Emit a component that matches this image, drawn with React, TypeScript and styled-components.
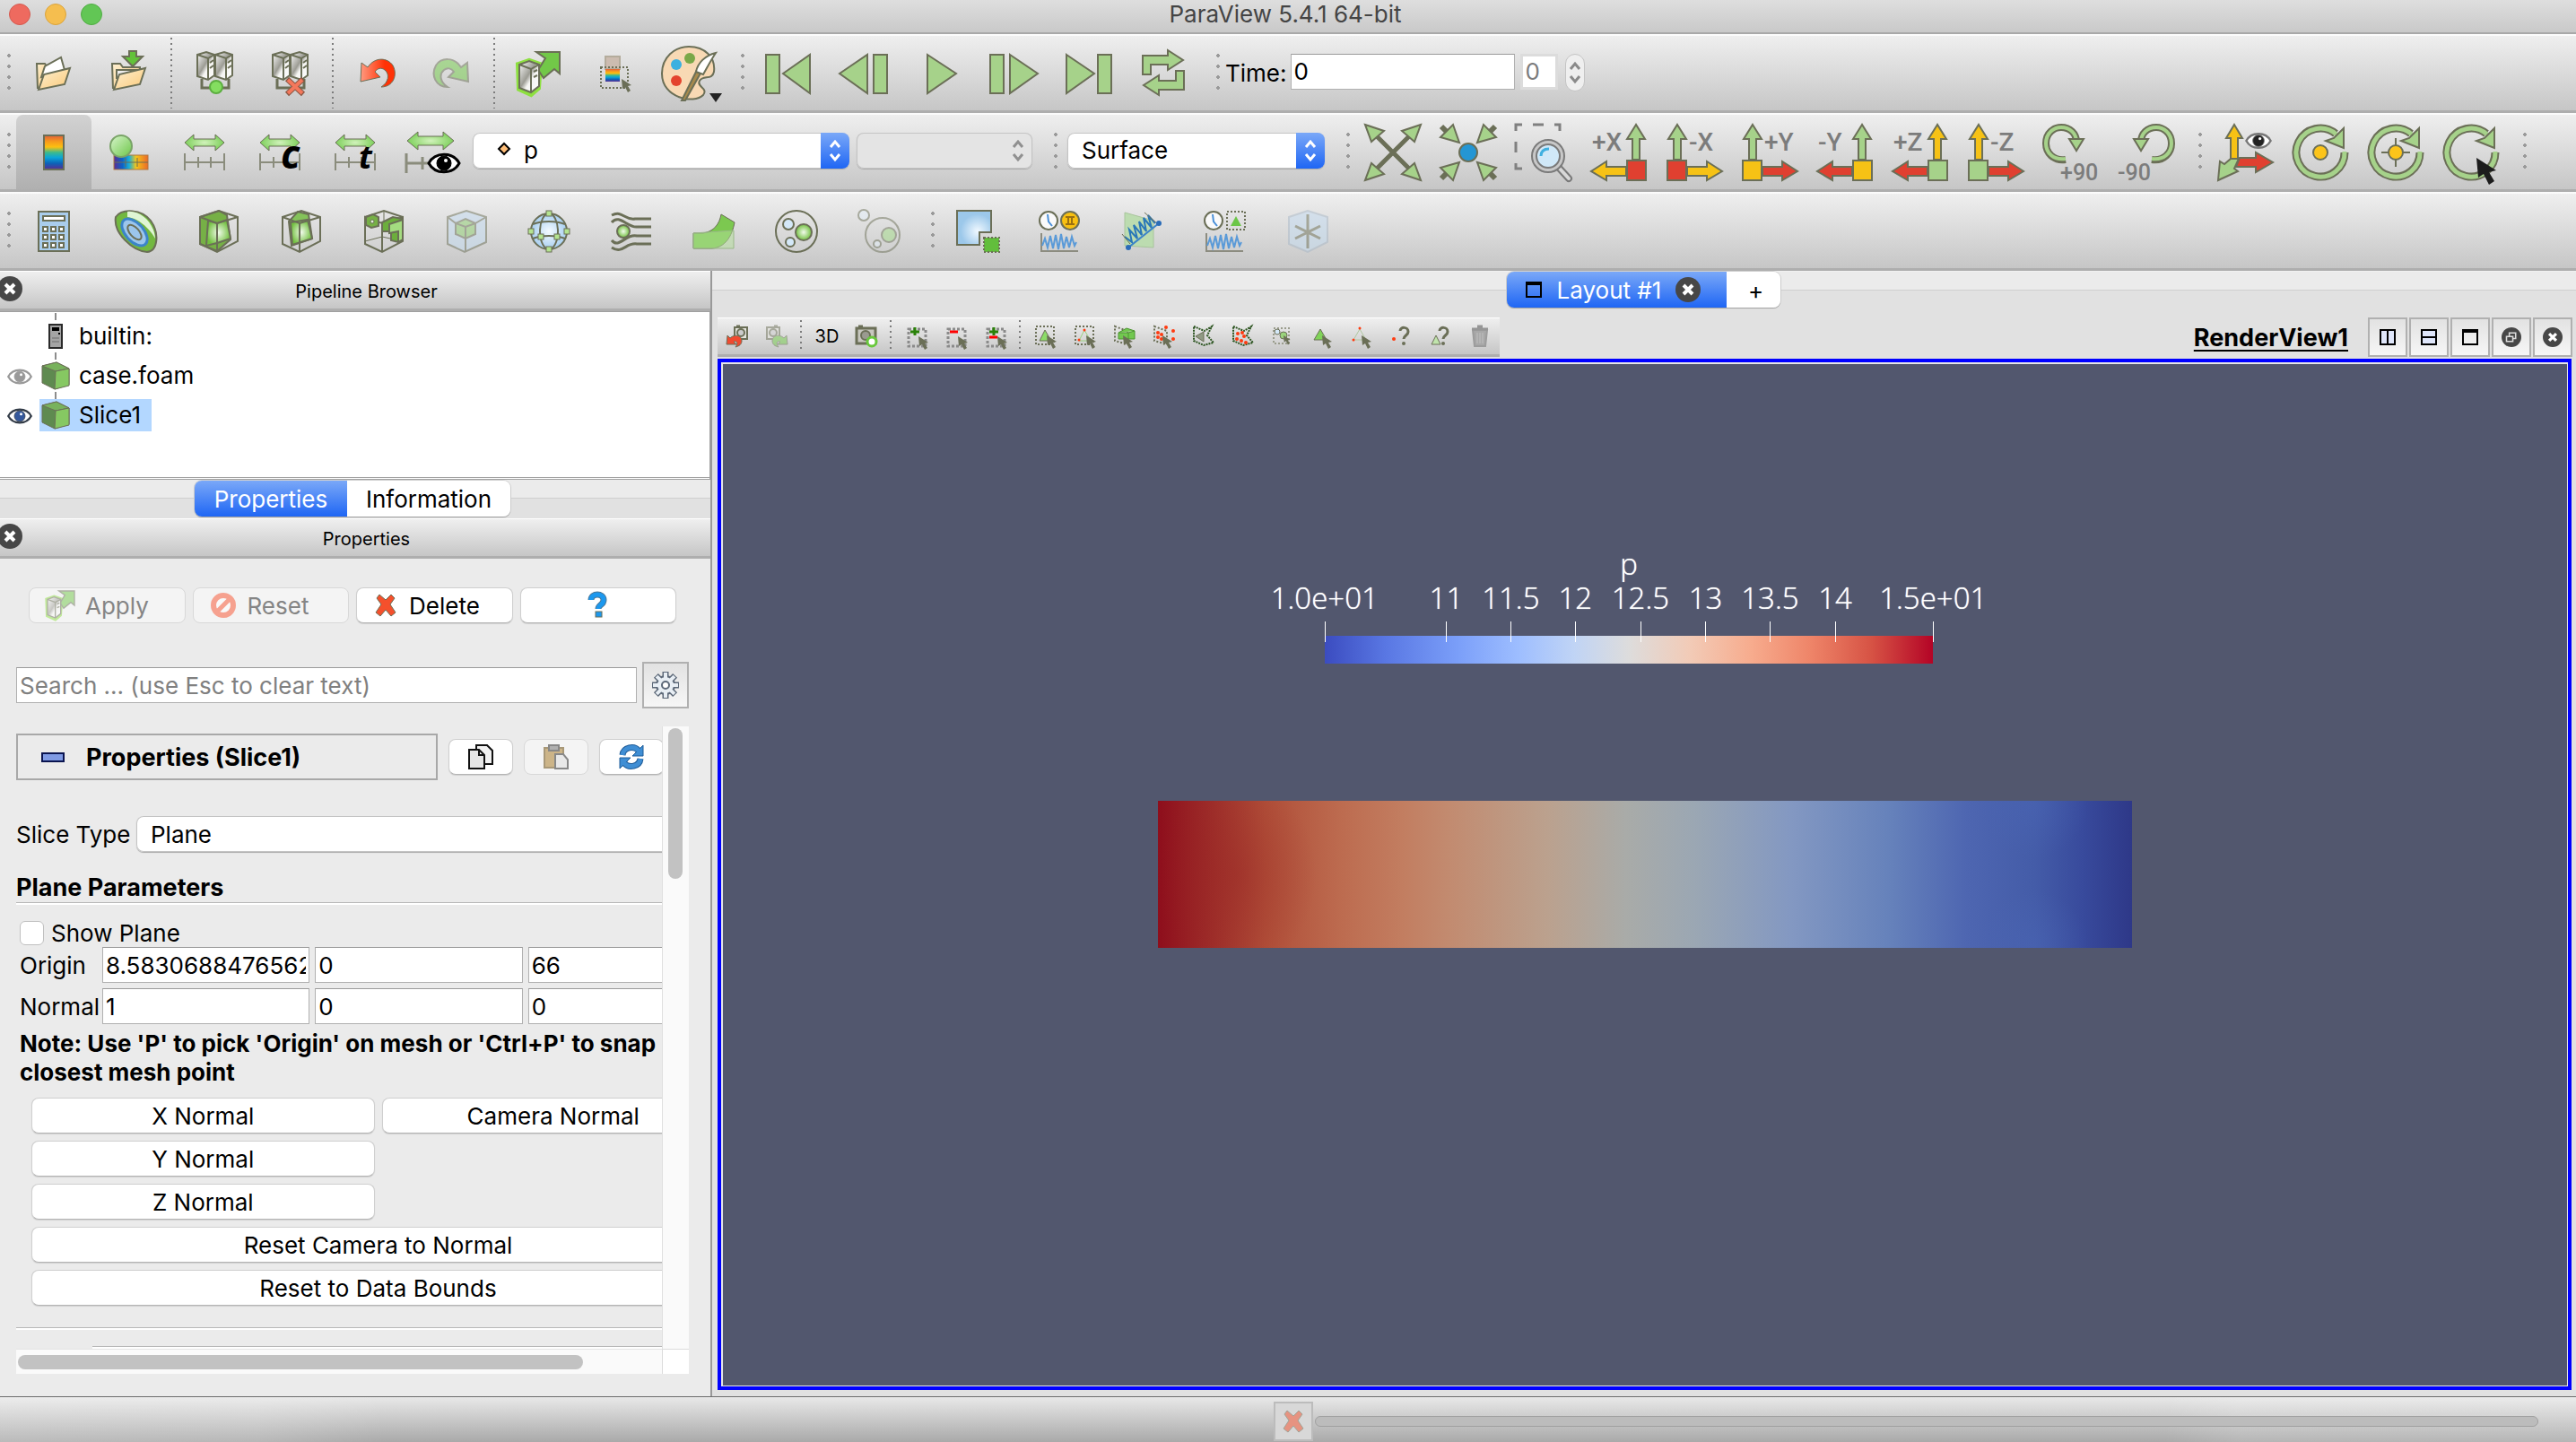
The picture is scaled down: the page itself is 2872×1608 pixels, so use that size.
import React from "react";
import styled, { createGlobalStyle, css } from "styled-components";

const OL = "#6b6f57";
const GR = "#a6d28a";
const YE = "#f6c215";
const RE = "#e04030";
const UI = `Inter, "Liberation Sans", sans-serif`;

const GlobalStyle = createGlobalStyle`
  * { box-sizing: border-box; }
  body { margin: 0; background: #ebebeb; font-family: ${UI}; font-size: 26px; color: #000; }
  button, input, select { font: inherit; color: inherit; margin: 0; }
  h1, h2, h3, p { margin: 0; font-weight: 400; }
`;

/* ---------- shared drawing helpers ---------- */

const Defs = () => (
  <HiddenSvg aria-hidden="true">
    <defs>
      <linearGradient id="rainbow" x1="0" y1="0" x2="0" y2="1">
        <stop offset="0" stopColor="#e0603a" />
        <stop offset=".18" stopColor="#f79a1c" />
        <stop offset=".34" stopColor="#fcc010" />
        <stop offset=".5" stopColor="#3cba8c" />
        <stop offset=".65" stopColor="#0aa5d8" />
        <stop offset=".82" stopColor="#0c62b8" />
        <stop offset="1" stopColor="#5b2c92" />
      </linearGradient>
      <linearGradient id="rainbowH" x1="0" y1="0" x2="1" y2="0">
        <stop offset="0" stopColor="#5b2c92" />
        <stop offset=".25" stopColor="#0c62c8" />
        <stop offset=".45" stopColor="#1ab0d8" />
        <stop offset=".65" stopColor="#f5c518" />
        <stop offset="1" stopColor="#ea6a2a" />
      </linearGradient>
      <linearGradient id="folder" x1="0" y1="0" x2="1" y2="1">
        <stop offset="0" stopColor="#fdf0d2" />
        <stop offset="1" stopColor="#fbc978" />
      </linearGradient>
      <linearGradient id="metal" x1="0" y1="0" x2="1" y2="1">
        <stop offset="0" stopColor="#ffffff" />
        <stop offset=".45" stopColor="#9c9c94" />
        <stop offset=".6" stopColor="#f5f5f2" />
        <stop offset="1" stopColor="#ffffff" />
      </linearGradient>
      <radialGradient id="green">
        <stop offset="0" stopColor="#f2fbec" />
        <stop offset="1" stopColor="#72c040" />
      </radialGradient>
      <linearGradient id="greenL" x1="0" y1="0" x2="1" y2="1">
        <stop offset="0" stopColor="#d8f5cc" />
        <stop offset="1" stopColor="#6cc648" />
      </linearGradient>
      <radialGradient id="greenA">
        <stop offset="0" stopColor="#d2f2bc" />
        <stop offset="1" stopColor="#7ed05c" />
      </radialGradient>
      <linearGradient id="redL" x1="0" y1="0" x2="1" y2="0">
        <stop offset="0" stopColor="#ff9a80" />
        <stop offset=".7" stopColor="#ff3206" />
      </linearGradient>
      <radialGradient id="blue">
        <stop offset="0" stopColor="#f4faff" />
        <stop offset="1" stopColor="#a8cff0" />
      </radialGradient>
      <radialGradient id="blueSq" cx=".6" cy=".6">
        <stop offset="0" stopColor="#f0f8ff" />
        <stop offset="1" stopColor="#9cc8ea" />
      </radialGradient>
    </defs>
  </HiddenSvg>
);

const HiddenSvg = styled.svg`
  position: absolute;
  width: 0;
  height: 0;
`;

const Svg = styled.svg<{ $s: number; $faded?: boolean }>`
  display: block;
  flex: none;
  overflow: visible;
  width: ${(p) => p.$s}px;
  height: ${(p) => p.$s}px;
  opacity: ${(p) => (p.$faded ? 0.5 : 1)};
`;

type IconProps = { s?: number; v?: number; faded?: boolean; children: React.ReactNode };
const Icon = ({ s = 48, v, faded, children }: IconProps) => (
  <Svg $s={s} $faded={faded} viewBox={`0 0 ${v ?? s} ${v ?? s}`} aria-hidden="true" fill="none" stroke={OL} strokeWidth={2}>
    {children}
  </Svg>
);

const Cursor = ({ x, y, k = 1, c = OL }: { x: number; y: number; k?: number; c?: string }) => (
  <path d="M0 0 L1 11 L4 9 L7 15 L10 13 L7 8 L11 7 Z" transform={`translate(${x} ${y}) scale(${k})`} fill={c} stroke="none" />
);

/* ---------- main toolbar icons ---------- */

const OpenIcon = () => (
  <Icon>
    <path d="M6 41 L5 13 H14 L17 17 V34" fill="url(#folder)" />
    <path d="M10 28 L14 16 L32 6 L36 20 Z" fill="#fff" />
    <path d="M7 42 L13 25 L42 18 L36 36 Z" fill="url(#folder)" />
  </Icon>
);
const LoadIcon = () => (
  <Icon>
    <path d="M6 41 L5 13 H14 L17 17 H36 V24" fill="url(#folder)" />
    <path d="M10 30 V20 H36" fill="#eee" />
    <path d="M7 42 L13 25 L42 18 L36 36 Z" fill="url(#folder)" />
    <path d="M24 -1 H32 V5 H39 L28 16 L17 5 H24 Z" fill="#62c23a" />
  </Icon>
);
const Servers = ({ bad }: { bad?: boolean }) => (
  <Icon>
    <path d="M9 30 V40 H39 V30" strokeWidth={3} />
    {[4, 24].map((x) => (
      <g key={x} strokeWidth={2}>
        <path d={`M${x} 3 L${x + 10} 0 L${x + 19} 3 V26 L${x + 12} 31 L${x} 27 Z`} fill="url(#metal)" />
        <path d={`M${x} 3 L${x + 12} 7 L${x + 19} 3 M${x + 12} 7 V31 M${x + 14} 12 L${x + 18} 9 M${x + 14} 18 L${x + 18} 15`} />
      </g>
    ))}
    {bad ? (
      <>
        <path d="M20 30 L38 47 M38 30 L20 47" stroke="#8c5844" strokeWidth={6} />
        <path d="M21 31 L37 46 M37 31 L21 46" stroke="#f4785c" strokeWidth={4} />
      </>
    ) : (
      <circle cx="25" cy="39" r="7" fill="#84de60" stroke="#5cae40" />
    )}
  </Icon>
);
const UndoShape = "M6 33 L7 12 L14 17 C22 5 36 6 42 15 C48 26 42 39 29 39 C37 34 39 25 33 20 C29 17 25 18 22 22 L28 28 Z";
const UndoIcon = () => (
  <Icon>
    <path d={UndoShape} fill="url(#redL)" strokeWidth={1} />
  </Icon>
);
const RedoIcon = () => (
  <Icon faded>
    <path d={UndoShape} transform="translate(48 0) scale(-1 1)" fill="#72cc48" />
  </Icon>
);
const ServerArrow = ({ s = 48, faded }: { s?: number; faded?: boolean }) => (
  <Icon s={s} v={48} faded={faded}>
    <path d="M2 14 L14 10 L26 14 L24 40 L16 47 L3 41 Z" stroke="#8ee040" strokeWidth={6} />
    <path d="M22 0 H48 V24 L42 19 L30 29 L24 20 L32 7 Z" fill="#72c848" />
    <path d="M3 14 L14 10 L25 14 V38 L16 45 L3 40 Z" fill="url(#metal)" />
    <path d="M3 14 L16 19 L25 14 M16 19 V45 M19 22 L23 20 M19 28 L23 26" />
  </Icon>
);
const CaptureIcon = () => (
  <Icon>
    <rect x="15" y="5" width="16" height="14" fill="#ccbcb0" stroke="#b4ac9c" />
    <rect x="15" y="19" width="16" height="14" fill="url(#rainbow)" stroke="none" />
    <path d="M10 17 H40 V40 H10 Z" strokeDasharray="2 2" />
    <Cursor x={33} y={30} />
  </Icon>
);
const PaletteIcon = () => (
  <Icon s={64}>
    <path d="M32 2 C50 2 62 14 60 30 C58 40 48 33 44 40 C40 47 54 48 48 56 C38 66 2 60 2 32 C2 14 16 2 32 2 Z" fill="#f8d9b4" />
    <circle cx="33" cy="15" r="6" fill="#7aa848" stroke="none" />
    <circle cx="18" cy="22" r="6" fill="#3cb0e0" stroke="none" />
    <circle cx="18" cy="40" r="6" fill="#e4442e" stroke="none" />
    <path d="M46 30 L41 28 L24 62 H28 Z" fill="#a88a4c" />
    <path d="M62 9 C50 12 42 20 40 30 L48 33 C52 26 56 18 62 9 Z" fill="#fff" />
    <path d="M55 54 H69 L62 64 Z" fill="#222" stroke="none" />
  </Icon>
);

const TriBar = ({ tri, bar }: { tri: string; bar?: number }) => (
  <Icon s={64}>
    <path d={tri} fill={GR} />
    {bar !== undefined && <rect x={bar} y="11" width="15" height="43" fill={GR} />}
  </Icon>
);
const LoopIcon = () => (
  <Icon s={64}>
    {[0, 180].map((a) => (
      <path key={a} transform={`rotate(${a} 31 31)`} d="M8 33 V12 H36 V6 L53 17 L36 28 V22 H17 V33 Z" fill={GR} />
    ))}
  </Icon>
);

/* ---------- color toolbar icons ---------- */

const ColorBarIcon = () => (
  <Icon>
    <rect x="13" y="5" width="22" height="38" fill="url(#rainbow)" />
  </Icon>
);
const EditMapIcon = () => (
  <Icon>
    <rect x="7" y="27" width="38" height="16" fill="url(#rainbowH)" stroke="#b07840" strokeWidth={1} />
    <path d="M7 35 H45 M20 30 V40 M33 30 V40" strokeWidth={1} />
    <circle cx="15" cy="17" r="12" fill="url(#greenL)" stroke="#7aa468" />
  </Icon>
);
const Eye = ({ x, y, k = 1, iris = "#000", lid = "#000" }: { x: number; y: number; k?: number; iris?: string; lid?: string }) => (
  <g transform={`translate(${x} ${y}) scale(${k})`} stroke={lid}>
    <path d="M-17 0 C-10 -13 10 -13 17 0 C10 13 -10 13 -17 0 Z" fill="#fff" strokeWidth={3} />
    <circle r="8" fill={iris} strokeWidth={1} />
    <circle cx="2" cy="-3" r="2" fill="#fff" stroke="none" />
  </g>
);
const RescaleIcon = ({ mark }: { mark?: "c" | "t" }) => (
  <Icon>
    <path d="M2 13 L12 4 V9 H36 V4 L46 13 L36 22 V17 H12 V22 Z" fill="url(#greenA)" strokeWidth={1} />
    <path d="M2 25 V44 M2 35 H46 M17 29 V41 M31 29 V41 M46 25 V44" strokeWidth={2} stroke="#8a8c7c" />
    {mark && (
      <text x={mark === "c" ? 25 : 28} y="42" fontFamily="Open Sans, sans-serif" fontWeight={700} fontStyle="italic" fontSize={mark === "c" ? 44 : 36} fill="#000" stroke="none">
        {mark}
      </text>
    )}
  </Icon>
);
const RescaleVisibleIcon = () => (
  <Icon>
    <path d="M-2 11 L10 1 V6 H38 V1 L50 11 L38 21 V16 H10 V21 Z" fill="url(#greenA)" strokeWidth={1} />
    <path d="M-3 25 V47 M-3 36 H22 M15 29 V43" strokeWidth={3} stroke="#8a8c7c" />
    <Eye x={39} y={36} />
  </Icon>
);

/* ---------- camera toolbar icons ---------- */

const quarter = [
  [1, 1],
  [-1, 1],
  [1, -1],
  [-1, -1],
];
const ResetCamIcon = () => (
  <Icon s={64}>
    <path d="M8 8 L56 56 M56 8 L8 56" strokeWidth={5} />
    {quarter.map(([a, b]) => (
      <path key={`${a}${b}`} transform={`translate(32 32) scale(${a} ${b})`} d="M-31 -31 L-10 -24 L-24 -12 Z" fill={GR} />
    ))}
  </Icon>
);
const ZoomDataIcon = () => (
  <Icon s={64}>
    {quarter.map(([a, b]) => (
      <g key={`${a}${b}`} transform={`translate(32 32) scale(${a} ${b})`}>
        <path d="M-30 -29 L-20 -19" strokeWidth={6} />
        <path d="M-10 -11 L-31 -17 L-17 -31 Z" fill={GR} />
      </g>
    ))}
    <circle cx="32" cy="32" r="10" fill="#2496d4" />
  </Icon>
);
const ZoomBoxIcon = () => (
  <Icon s={64}>
    <path d="M1 8 V1 H8 M20 1 H32 M44 1 H50 V8 M1 20 V32 M1 44 V50 H8" stroke="#808080" strokeWidth={3} />
    <path d="M49 49 L60 61" stroke="#7a7a7a" strokeWidth={8} strokeLinecap="round" />
    <path d="M49 49 L60 61" stroke="#d8d8d8" strokeWidth={4} strokeLinecap="round" />
    <circle cx="37" cy="36" r="18" fill="#c8c8c8" stroke="#7a7a7a" />
    <circle cx="37" cy="36" r="13" fill="#d0e8f8" stroke="#7a7a7a" />
    <path d="M29 36 C29 30 33 28 38 28" stroke="#40b0e0" strokeWidth={3} />
  </Icon>
);
type AxisProps = { label: string; right?: boolean; up: string; box: string; side: string };
const AxisIcon = ({ label, right, up, box, side }: AxisProps) => (
  <Icon s={64}>
    <g transform={right ? undefined : "translate(64 0) scale(-1 1)"}>
      <path d="M13 1 L23 17 H17 V40 H9 V17 H3 Z" fill={up} />
      <path d="M24 48 H46 V42 L63 53 L46 63 V58 H24 Z" fill={side} />
      <rect x="2" y="41" width="21" height="22" fill={box} />
    </g>
    <text x={right ? 26 : 2} y="30" fontFamily="Roboto, sans-serif" fontWeight={500} fontSize="28" fill="#7c7c7c" stroke="none">
      {label}
    </text>
  </Icon>
);
const TurnIcon = ({ left }: { left?: boolean }) => (
  <Icon s={64}>
    <g transform={left ? "translate(64 0) scale(-1 1)" : undefined}>
      <path d="M26 40 C12 42 4 32 4 22 C4 10 13 4 21 4 C31 4 38 11 38 20" strokeWidth={8} />
      <path d="M26 39 C12 41 4 32 4 22 C4 10 13 4 21 4 C31 4 38 11 38 20" stroke={GR} strokeWidth={4} />
      <path d="M30 17 H46 L38 30 Z" fill={GR} />
    </g>
    <text x={left ? 0 : 20} y="63" fontFamily="Roboto, sans-serif" fontWeight={500} fontSize="25" fill="#7c7c7c" stroke="none">
      {left ? "-90" : "+90"}
    </text>
  </Icon>
);
const OrientIcon = () => (
  <Icon s={64}>
    <path d="M20 1 L29 16 H24 V40 H16 V16 H11 Z" fill={YE} />
    <path d="M26 38 H44 V32 L63 43 L44 54 V48 H22 Z" fill={RE} />
    <path d="M16 39 H25 L20 50 L24 53 L2 63 L4 42 L9 45 Z" fill={GR} />
    <Eye x={47} y={19} k={0.8} iris="#222" lid="#777" />
  </Icon>
);
const RotateIcon = ({ mark }: { mark: "dot" | "cross" | "cursor" }) => (
  <Icon s={64}>
    <path d="M59 32 A27 27 0 1 1 49 11" strokeWidth={9} />
    <path d="M59 31 A27 27 0 1 1 50 12" stroke={GR} strokeWidth={5} />
    <path d="M58 5 V27 L38 19 L47 16 Z" fill={GR} />
    {mark === "cross" && <path d="M32 16 V48 M16 32 H48" />}
    {mark !== "cursor" && <circle cx="32" cy="32" r="8" fill="#fcc41a" />}
    {mark === "cursor" && <Cursor x={38} y={38} k={2} c="#1c1c1c" />}
  </Icon>
);

/* ---------- filter toolbar icons ---------- */

const CalcIcon = () => (
  <Icon>
    <rect x="7" y="2" width="34" height="44" fill="#a9cdec" />
    <rect x="12" y="7" width="24" height="5" fill="#fff" />
    {[0, 1, 2].map((r) => [0, 1, 2].map((c) => <rect key={`${r}${c}`} x={12 + c * 9} y={19 + r * 9} width="5" height="5" fill="#fff" />))}
  </Icon>
);
const ContourIcon = () => (
  <Icon>
    <path d="M1 8 C8 -2 30 -1 40 12 C50 26 48 46 36 47 C20 46 -2 26 1 8 Z" fill="#72b840" />
    <path d="M14 2 C28 0 44 14 45 32 C42 26 30 10 14 8 Z" fill="#dff5d4" stroke="none" />
    <ellipse cx="22" cy="25" rx="18" ry="10" transform="rotate(48 22 25)" fill="#9cc6ec" stroke="#3c84c8" strokeWidth={3} />
    <ellipse cx="22" cy="25" rx="10" ry="5" transform="rotate(48 22 25)" />
  </Icon>
);
const CubeFrame = () => <path d="M3 8 L24 1 L45 8 V35 L22 47 L3 38 Z M3 8 L22 15 L45 8 M22 15 V47" />;
const ClipIcon = () => (
  <Icon>
    <path d="M3 8 L24 1 L33 6 L37 33 L22 46 L3 38 Z" fill="#76b046" />
    <path d="M12 12 L22 15 L33 11 L37 32 L22 37 L10 40 Z" fill="url(#green)" />
    <CubeFrame />
  </Icon>
);
const SliceIcon = () => (
  <Icon>
    <path d="M10 13 L20 2 L32 5 L36 32 L13 40 Z" fill="#84c25a" />
    <path d="M12 14 L31 11 L36 32 L14 39 Z" fill="url(#green)" />
    <CubeFrame />
  </Icon>
);
const ThresholdIcon = () => (
  <Icon>
    <path d="M3 35 L22 30 L45 35 M24 1 V12" strokeWidth={1} />
    <path d="M3 8 L22 15 L45 8 V35 L22 47 L3 38 Z L24 1 L45 8 M22 15 V47" />
    <path d="M4 8 L12 5 L18 8 V18 L10 20 L4 17 Z" fill="#76b046" />
    <path d="M22 14 L34 8 L45 10 V33 L40 36 L32 34 V24 H22 Z" fill="#6cae3c" />
    <path d="M30 16 L45 11 V33 L40 36 V24 L30 26 Z" fill="#a4dc80" />
    <circle cx="11" cy="13" r="2" fill="#e4f4dc" strokeWidth={1} />
  </Icon>
);
const SubsetIcon = () => (
  <Icon faded>
    <path d="M3 8 L24 1 L46 8 V36 L22 47 L3 38 Z" fill="#c4dcf2" />
    <path d="M12 15 L23 10 L34 15 V27 L23 32 L12 27 Z" fill="#90d070" />
    <path d="M12 15 L23 19 L34 15 M23 19 V46 M3 8 L12 15 M46 8 L34 15" />
  </Icon>
);
const GlyphIcon = () => (
  <Icon>
    <circle cx="24" cy="24" r="20" fill="url(#blue)" />
    <ellipse cx="24" cy="24" rx="10" ry="20" />
    <path d="M6 16 C16 12 32 12 42 16 M6 32 C16 28 32 28 42 32" />
    {[[24, 4], [24, 44], [4, 24], [44, 24], [15, 30], [33, 30]].map(([x, y]) => (
      <rect key={`${x}-${y}`} x={x - 3} y={y - 3} width="6" height="6" fill="#b4e490" strokeWidth={1} />
    ))}
  </Icon>
);
const StreamIcon = () => (
  <Icon>
    {["M2 6 C14 0 16 12 28 10 H46", "M2 14 C10 4 20 20 30 19 H46", "M2 34 C10 44 18 26 30 29 H46", "M2 42 C14 50 18 36 30 38 H46"].map((d) => (
      <path key={d} d={d} strokeWidth={3} />
    ))}
    <circle cx="15" cy="24" r="7" fill="url(#green)" />
  </Icon>
);
const WarpIcon = () => (
  <Icon>
    <path d="M1 26 H12 C24 24 30 16 32 5 L47 14 C44 30 36 42 22 43 H1 Z" fill="#7cc850" strokeWidth={1} />
    <path d="M1 26 L46 23 V43 H1 Z" fill="#b4e09a" fillOpacity=".5" stroke="#9ab888" strokeWidth={1} />
  </Icon>
);
const GroupIcon = () => (
  <Icon>
    <circle cx="24" cy="24" r="23" />
    <circle cx="15" cy="16" r="6" fill="#d4e8f8" />
    <circle cx="32" cy="25" r="9" fill="url(#green)" />
    <circle cx="17" cy="36" r="5" fill="#d4e8f8" />
  </Icon>
);
const ExtractIcon = () => (
  <Icon faded>
    <circle cx="7" cy="6" r="6" fill="#e4f0fa" />
    <circle cx="28" cy="28" r="19" />
    <circle cx="35" cy="28" r="8" fill="#a4dc88" />
    <circle cx="22" cy="38" r="4" fill="#e4f0fa" />
  </Icon>
);
const SelectExtractIcon = () => (
  <Icon>
    <path d="M1 1 H39 V25 H26 V39 H1 Z" fill="url(#blueSq)" />
    <rect x="31" y="31" width="17" height="16" fill="#62be3c" strokeDasharray="2 2" />
  </Icon>
);
const Wave = () => (
  <>
    <path d="M3 26 V46 H44" stroke="#8c8c80" />
    <path d="M4 40 L7 32 L10 42 L13 29 L16 43 L19 28 L22 44 L25 27 L28 43 L31 30 L34 42 L37 30 L40 40 L42 36" stroke="#5a9ad8" />
  </>
);
const PlotTimeIcon = ({ sel }: { sel?: boolean }) => (
  <Icon>
    <circle cx="11" cy="12" r="10" fill="#fafafa" />
    <path d="M10 5 L11 13 L15 18" stroke="#4a90d8" />
    {sel ? (
      <>
        <path d="M26 2 H46 V22 H26 Z" strokeDasharray="2 2" />
        <path d="M36 7 L42 18 H30 Z" fill="#6cc648" stroke="none" />
      </>
    ) : (
      <>
        <circle cx="35" cy="12" r="10" fill="#f8c010" />
        <path d="M30 8 H40 M30 16 H40 M33 8 V16 M37 8 V16" stroke="#9a7010" />
      </>
    )}
    <Wave />
  </Icon>
);
const PlotLineIcon = () => (
  <Icon>
    <path d="M4 3 L36 12 V42 L4 40 Z" fill="#bcdcb0" stroke="#a8c49c" strokeWidth={1} />
    <path d="M4 30 L12 36 L9 22 L18 32 L14 17 L23 28 L20 13 L28 24 L25 9 L34 20 L30 6 L38 15" stroke="#2a78b8" />
    <path d="M1 27 L10 38 M26 3 L42 17" strokeWidth={1} />
    <path d="M8 42 L42 15" stroke="#3c84c8" strokeWidth={2} />
    <circle cx="8" cy="42" r="3" fill="#2a6cb8" stroke="none" />
    <circle cx="42" cy="15" r="3" fill="#2a6cb8" stroke="none" />
  </Icon>
);
const ProbeIcon = () => (
  <Icon faded>
    <path d="M3 8 L24 1 L46 8 V36 L24 47 L3 38 Z" fill="#c4dcf2" stroke="#a8b8c8" />
    <path d="M24 5 V43 M10 18 L38 32 M38 18 L10 32" strokeWidth={3} />
  </Icon>
);

/* ---------- view toolbar icons ---------- */

const CamUndo = ({ redo }: { redo?: boolean }) => (
  <Icon s={24} faded={redo}>
    <g transform={redo ? "translate(24 0) scale(-1 1)" : undefined}>
      <path d="M11 1 H15" strokeWidth={3} />
      <rect x="9" y="2" width="14" height="13" fill="#e4e4dc" />
      <circle cx="16" cy="8" r="4" fill="#ccc" />
      <path d="M0 21 L1 11 L4 14 C9 9 17 11 17 17 C17 21 14 23 10 24 C13 20 12 17 8 18 L11 21 Z" fill={redo ? "#72cc48" : "#f04a30"} strokeWidth={1} />
    </g>
  </Icon>
);
const CamAdjust = () => (
  <Icon s={24}>
    <path d="M3 1 H8" strokeWidth={3} />
    <rect x="1" y="3" width="21" height="17" fill="#c8c8c0" strokeWidth={3} />
    <circle cx="11" cy="11" r="5" fill="#9a9a90" />
    <circle cx="18" cy="18" r="5" fill="#fff" stroke="#68c83c" strokeWidth={3} />
  </Icon>
);
const SelMod = ({ plus, minus }: { plus?: boolean; minus?: boolean }) => (
  <Icon s={24}>
    <path d="M3 4 H22 V23 H3 Z" stroke="#8a8a8a" strokeWidth={3} strokeDasharray="3 2" />
    {plus && <path d="M10 2 V11 M5 7 H15" stroke="#2a8208" strokeWidth={3} />}
    {minus && <path d={plus ? "M5 13 H14" : "M5 7 H14"} stroke="#f00" strokeWidth={3} />}
    <Cursor x={14} y={12} />
  </Icon>
);
type SelKind = "cell" | "point" | "block" | "pts3d" | "polyCell" | "polyPt" | "blocks";
const dots = (pts: number[][], r = 1.5) => pts.map(([x, y]) => <circle key={`${x}-${y}`} cx={x} cy={y} r={r} fill="#ff3a10" stroke="none" />);
const ZIG = "M1 1 L13 6 L21 1 L16 11 L23 19 L12 22 L1 17 Z";
const SelIcon = ({ kind }: { kind: SelKind }) => (
  <Icon s={24}>
    {(kind === "cell" || kind === "point") && <path d="M1 1 H21 V21 H1 Z" strokeDasharray="2 2" />}
    {kind === "blocks" && <path d="M2 3 H19 V20 H2 Z" strokeDasharray="2 2" stroke="#9a9c8c" />}
    {kind === "cell" && <path d="M11 5 L18 17 H5 Z" fill="#8cdc68" strokeWidth={1} />}
    {kind === "point" && <><path d="M11 5 L18 17 H5 Z" strokeWidth={1} stroke="#9ad080" />{dots([[11, 5], [5, 16], [17, 16]])}</>}
    {(kind === "block" || kind === "pts3d") && <path d="M1 1 L15 6 V21 L1 17 Z" strokeDasharray="2 2" />}
    {kind === "block" && <path d="M5 8 L14 3 L23 6 V15 H5 Z M5 8 H16 L23 6 M16 8 V15" fill="#72c850" strokeWidth={1} stroke="#4c9430" />}
    {kind === "pts3d" && dots([[5, 8], [9, 10], [5, 13], [9, 15], [14, 2], [22, 6], [22, 15]], 2)}
    {(kind === "polyCell" || kind === "polyPt") && <path d={ZIG} strokeDasharray="2 1" stroke="#2c5420" />}
    {kind === "polyCell" && <path d="M3 12 L12 7 V18 Z" fill="#909a84" strokeWidth={1} />}
    {kind === "polyPt" && dots([[6, 9], [5, 15], [11, 8], [10, 17], [15, 19], [13, 12]], 2)}
    {kind === "blocks" && <><circle cx="6" cy="7" r="3" fill="#d4e8f8" strokeWidth={1} /><circle cx="13" cy="11" r="4" fill="#9ad47c" strokeWidth={1} /></>}
    {kind !== "polyCell" && kind !== "polyPt" && <Cursor x={kind === "block" || kind === "pts3d" ? 10 : 13} y={11} k={kind === "blocks" ? 0.7 : 1} />}
  </Icon>
);
const PickIcon = ({ pt }: { pt?: boolean }) => (
  <Icon s={24}>
    <path d="M10 4 L17 16 H3 Z" fill={pt ? "none" : "#80d458"} strokeWidth={1} stroke={pt ? "#b0c8a0" : OL} />
    {pt && dots([[10, 3], [3, 16], [16, 16]])}
    <Cursor x={12} y={11} />
  </Icon>
);
const HoverIcon = ({ cell }: { cell?: boolean }) => (
  <Icon s={24}>
    {cell ? <path d="M7 11 L12 21 H2 Z" fill="#c0e4ac" strokeWidth={1} /> : dots([[4, 15]], 2)}
    <path d="M11 6 C11 1 20 1 20 7 C20 11 15 11 15 15" strokeWidth={3} />
    <circle cx="15" cy="20" r="2" fill={OL} stroke="none" />
  </Icon>
);
const TrashIcon = () => (
  <Icon s={24}>
    <path d="M4 5 H20 L18 23 H6 Z" fill="#a8a8a8" stroke="#9c9c9c" />
    <path d="M3 4 H21 M9 1 H15" stroke="#969696" strokeWidth={3} />
    <path d="M9 8 V20 M12 8 V20 M15 8 V20" stroke="#c0c0c0" strokeWidth={1} />
  </Icon>
);
const WinIcon = ({ kind = "full" }: { kind?: "full" | "h" | "v" }) => (
  <Icon s={20}>
    <rect x="2" y="2" width="16" height="16" stroke="#000" fill={kind === "full" ? "none" : "#dfe6fa"} />
    <path d={kind === "h" ? "M10 2 V18" : kind === "v" ? "M2 10 H18" : "M2 3 H18"} stroke="#000" strokeWidth={kind === "full" ? 4 : 2} />
  </Icon>
);
const RoundIcon = ({ s = 28, kind = "x" }: { s?: number; kind?: "x" | "pop" }) => (
  <Icon s={s} v={28}>
    <circle cx="14" cy="14" r="14" fill="#474747" stroke="none" />
    {kind === "x" ? (
      <path d="M9 9 L19 19 M19 9 L9 19" stroke="#fff" strokeWidth={4} />
    ) : (
      <path d="M7 13 H16 V20 H7 Z M11 13 V8 H20 V16 H16" stroke="#ddd" />
    )}
  </Icon>
);
const Chevrons = ({ color = "#fff" }: { color?: string }) => (
  <svg width="16" height="26" viewBox="0 0 16 26" fill="none" stroke={color} strokeWidth="3" aria-hidden="true">
    <path d="M3 9 L8 3 L13 9 M3 17 L8 23 L13 17" />
  </svg>
);

/* ---------- panel icons ---------- */

const DeleteIcon = ({ faded }: { faded?: boolean }) => (
  <Icon s={28} faded={faded}>
    <path d="M7 2 L14 8 L20 2 L24 6 L19 13 L25 22 L20 26 L14 19 L8 26 L3 22 L9 13 L4 6 Z" fill="#f5502c" strokeWidth={1} />
  </Icon>
);
const ForbidIcon = () => (
  <Icon s={30} faded>
    <circle cx="15" cy="15" r="11" fill="#fff" stroke="#f8502c" strokeWidth={6} />
    <path d="M8 22 L22 8" stroke="#f8502c" strokeWidth={5} />
  </Icon>
);
const HelpIcon = () => (
  <Icon s={28}>
    <path d="M6 8 C6 0 20 0 20 8 C20 14 14 13 14 18" stroke="#4c7898" strokeWidth={7} />
    <path d="M6 8 C6 0 20 0 20 8 C20 14 14 13 14 18" stroke="#1c98ee" strokeWidth={5} />
    <rect x="11" y="21" width="7" height="6" fill="#1c98ee" strokeWidth={1} />
  </Icon>
);
const GearIcon = () => (
  <Icon s={32}>
    {[0, 45, 90, 135].map((a) => (
      <path key={a} d="M16 1 V31" stroke="#5c6878" strokeWidth={7} transform={`rotate(${a} 16 16)`} />
    ))}
    <circle cx="16" cy="16" r="10" fill="#e8eef4" stroke="#5c6878" />
    {[0, 45, 90, 135].map((a) => (
      <path key={a} d="M16 2 V30" stroke="#e8eef4" strokeWidth={4} transform={`rotate(${a} 16 16)`} />
    ))}
    <circle cx="16" cy="16" r="4" fill="#fff" stroke="#5c6878" />
  </Icon>
);
const CopyIcon = () => (
  <Icon s={28}>
    <path d="M9 1 H21 L27 7 V22 H9 Z" fill="#f2f2f2" stroke="#111" />
    <path d="M1 6 H12 L18 12 V27 H1 Z M12 6 V12 H18" fill="#e6e6e6" stroke="#111" />
  </Icon>
);
const PasteIcon = () => (
  <Icon s={28}>
    <rect x="1" y="4" width="21" height="22" fill="#ccb488" stroke="#a89878" />
    <rect x="6" y="1" width="11" height="6" fill="#b0b0b0" stroke="#888" />
    <path d="M13 11 H22 L27 17 V27 H13 Z" fill="#e8e8e8" stroke="#888" />
  </Icon>
);
const RefreshIcon = () => (
  <Icon s={28}>
    <path d="M4 12 C5 3 17 1 22 7 M24 16 C23 25 11 27 6 21" stroke="#1f5c98" strokeWidth={7} />
    <path d="M27 1 V13 H15 Z M1 27 V15 H13 Z" fill="#3f8ed4" stroke="#1f5c98" strokeWidth={1} />
    <path d="M4 12 C5 3 17 1 22 7 M24 16 C23 25 11 27 6 21" stroke="#3f8ed4" strokeWidth={5} />
  </Icon>
);
const MinusIcon = () => (
  <Icon s={26}>
    <rect x="1" y="9" width="24" height="9" fill="#7f9ae4" stroke="#0a1450" />
  </Icon>
);
const ServerIcon = () => (
  <Icon s={32}>
    <rect x="9" y="3" width="14" height="26" fill="#a4a4a4" stroke="#2a2a2a" />
    <path d="M12 8 H20" stroke="#000" strokeWidth={4} />
    <path d="M12 18 H20 M12 22 H20" stroke="#888" />
    <path d="M19 13 H21" stroke="#000" />
  </Icon>
);
const CubeIcon = () => (
  <Icon s={32}>
    <path d="M1 5 L17 1 L31 8 V26 L15 31 L1 24 Z" fill="#5f8a50" strokeWidth={1} />
    <path d="M1 5 L17 1 L31 8 L16 11 Z" fill="#78b25c" strokeWidth={1} />
    <path d="M16 11 L31 8 V27 L15 31 Z" fill="#86c862" strokeWidth={1} />
  </Icon>
);
const TreeEye = ({ on }: { on?: boolean }) => (
  <Icon s={28}>
    <Eye x={14} y={15} k={0.75} iris={on ? "#34589c" : "#999"} lid={on ? "#333c48" : "#999"} />
  </Icon>
);
const PointIcon = () => (
  <Icon s={16}>
    <path d="M8 2 L14 8 L8 14 L2 8 Z" fill="#ffbe78" stroke="#000" />
  </Icon>
);

/* ---------- layout ---------- */

const barFill = css`
  background: linear-gradient(#efefef, #c6c6c6);
`;
const Shell = styled.div`
  min-height: 100vh;
  display: flex;
  flex-direction: column;
  overflow: hidden;
`;
const TitleBar = styled.header`
  height: 38px;
  display: flex;
  align-items: center;
  background: linear-gradient(#dedede, #c9c9c9);
  border-bottom: 2px solid #a8a8a8;
  padding: 0 16px 4px 10px;
`;
const Lights = styled.div`
  flex: 1;
  display: flex;
  gap: 16px;
`;
const Light = styled.button<{ $c: string; $b: string }>`
  width: 24px;
  height: 24px;
  padding: 0;
  border-radius: 50%;
  background: ${(p) => p.$c};
  border: 1px solid ${(p) => p.$b};
`;
const WindowTitle = styled.h1`
  font-size: 26px;
  line-height: 32px;
  color: #444;
`;
const Toolbar = styled.div`
  ${barFill};
  height: 88px;
  display: flex;
  border-top: 2px solid #fbfbfb;
  border-bottom: 3px solid #aeaeae;
`;
const Group = styled.div<{ $gap?: number; $first?: boolean }>`
  display: flex;
  align-items: center;
  gap: ${(p) => p.$gap ?? 0}px;
  padding-left: ${(p) => (p.$first ? 0 : 8)}px;
`;
const Grip = styled.span<{ $gap?: number }>`
  flex: none;
  width: 4px;
  height: 52px;
  margin: 0 ${(p) => 6 - (p.$gap ?? 0)}px 0 8px;
  background: radial-gradient(circle, #999 2px, transparent 2px) 0 0 / 4px 12px;
`;
const Sep = styled.span`
  flex: none;
  align-self: stretch;
  width: 2px;
  margin: 2px 6px 2px 4px;
  background: repeating-linear-gradient(#7c7c7c 0 2px, transparent 2px 6px);
`;
const Tool = styled.button<{ $checked?: boolean; $w?: number }>`
  flex: none;
  width: ${(p) => p.$w ?? 84}px;
  height: 100%;
  padding: 0;
  border: 0;
  border-radius: 8px 8px 0 0;
  background: ${(p) => (p.$checked ? "linear-gradient(#d2d2d2, #b0b0b0)" : "none")};
  display: flex;
  align-items: center;
  justify-content: center;
  font-size: 20px;
`;
const TimeLabel = styled.label`
  margin-right: 4px;
`;
const Field = styled.input<{ $w?: number; $muted?: boolean }>`
  width: ${(p) => (p.$w ? `${p.$w}px` : "100%")};
  min-width: 0;
  height: 40px;
  padding: 0 3px;
  border: 1px solid #b0b0b0;
  border-top-color: #9a9a9a;
  border-radius: 0;
  background: #fff;
  color: ${(p) => (p.$muted ? "#7c7c7c" : "#000")};
  &::placeholder { color: #808080; opacity: 1; }
`;
const TimeGroup = styled(Group)`
  & > input { margin-bottom: 4px; }
`;
const Spin = styled.button`
  width: 22px;
  height: 42px;
  margin-left: 8px;
  margin-bottom: 2px;
  padding: 0;
  border: 1px solid #c4c4c4;
  border-radius: 11px;
  background: #efefef;
  display: flex;
  align-items: center;
  justify-content: center;
`;
const TimeIndex = styled(Field)`
  margin-left: 6px;
  border: 3px solid #dcdcdc;
`;
const ComboBox = styled.div<{ $w?: number; $off?: boolean }>`
  position: relative;
  flex: ${(p) => (p.$w ? "none" : 1)};
  width: ${(p) => (p.$w ? `${p.$w}px` : "auto")};
  height: 40px;
  display: flex;
  border-radius: 8px;
  overflow: hidden;
  background: ${(p) => (p.$off ? "#e4e4e4" : "#fff")};
  box-shadow: inset 0 0 0 1px #c4c4c4, 0 1px 1px #aaa;
`;
const Select = styled.select<{ $pad: number }>`
  flex: 1;
  appearance: none;
  border: 0;
  background: none;
  padding: 0 0 0 ${(p) => p.$pad}px;
`;
const ComboArrow = styled.span<{ $off?: boolean }>`
  width: 32px;
  display: flex;
  align-items: center;
  justify-content: center;
  background: ${(p) => (p.$off ? "none" : "linear-gradient(#7aa8f8, #1f66f4)")};
  pointer-events: none;
`;
const ComboIcon = styled.span`
  position: absolute;
  left: 27px;
  top: 10px;
`;
const Combos = styled.div`
  display: flex;
  gap: 8px;
  padding: 0 8px 4px 5px;
`;

const Main = styled.main`
  flex: 1;
  display: flex;
`;
const Dock = styled.aside`
  flex: none;
  width: 794px;
  display: flex;
  flex-direction: column;
  border-right: 2px solid #999;
`;
const DockTitle = styled.div`
  ${barFill};
  height: 45px;
  display: flex;
  align-items: center;
  border-top: 1px solid #fff;
  border-bottom: 3px solid #aeaeae;
  h2 { flex: 1; text-align: center; font-size: 20px; line-height: 24px; padding-top: 2px; }
`;
const Plain = styled.button`
  border: 0;
  padding: 0;
  background: none;
  display: flex;
`;
const DockClose = styled(Plain)`
  width: 28px;
  margin-left: -3px;
  margin-bottom: 4px;
`;
const Tree = styled.ul`
  margin: 0;
  padding: 9px 0 0;
  list-style: none;
  height: 188px;
  background: #fff;
  border: 1px solid #a0a0a0;
  border-left: 0;
  border-bottom: 3px double #a0a0a0;
`;
const TreeRow = styled.li`
  height: 36px;
  margin-bottom: 8px;
  display: flex;
  align-items: center;
  padding-left: 8px;
  line-height: 34px;
`;
const EyeSlot = styled(Plain)`
  width: 28px;
  height: 28px;
  margin-right: 8px;
`;
const TreeItem = styled.span<{ $sel?: boolean }>`
  position: relative;
  height: 36px;
  display: flex;
  align-items: center;
  gap: 10px;
  padding: 0 12px 0 2px;
  background: ${(p) => (p.$sel ? "#b3d7ff" : "none")};
  &::before {
    content: "";
    position: absolute;
    left: 17px;
    top: -8px;
    width: 2px;
    height: 8px;
    background: #8c8c8c;
  }
`;
const TabStrip = styled.div<{ $h: number }>`
  height: ${(p) => p.$h}px;
  display: flex;
  justify-content: center;
  background: linear-gradient(#ebebeb 20px, #cfcfcf 20px, #cfcfcf 21px, #e1e1e1 21px);
`;
const TabSet = styled.div`
  display: flex;
  height: 40px;
  border-radius: 8px;
  overflow: hidden;
  box-shadow: 0 1px 1px #a0a0a0, 0 0 0 1px #d0d0d0;
`;
const Tab = styled.button<{ $on?: boolean; $w: number }>`
  width: ${(p) => p.$w}px;
  border: 0;
  padding: 0 8px 0 0;
  display: flex;
  align-items: center;
  justify-content: center;
  gap: 16px;
  color: ${(p) => (p.$on ? "#fff" : "#000")};
  background: ${(p) => (p.$on ? "linear-gradient(#7aa8f8, #1f66f4)" : "#fff")};
`;
const DockTab = styled(Tab)`
  padding: 0;
`;
const PlusTab = styled(Tab)`
  padding: 0 0 0 6px;
`;
const DockTabs = styled(TabStrip)`
  padding: 1px 6px 0 0;
`;
const Panel = styled.div`
  flex: 1;
  display: flex;
  flex-direction: column;
  padding: 32px 24px 25px 18px;
`;
const Push = styled.button<{ $icon?: boolean }>`
  min-width: 0;
  height: 40px;
  border: 1px solid #cfcfcf;
  border-bottom-color: #b4b4b4;
  border-radius: 8px;
  background: #fff;
  padding: 0 ${(p) => (p.$icon ? 18 : 0)}px;
  display: flex;
  align-items: center;
  justify-content: ${(p) => (p.$icon ? "flex-start" : "center")};
  gap: 12px;
  box-shadow: 0 1px 1px #d0d0d0;
  &:disabled { background: #f4f4f4; color: #858585; box-shadow: none; border-color: #d8d8d8; }
`;
const ActionRow = styled.div`
  display: grid;
  grid-template-columns: repeat(4, 1fr);
  gap: 8px;
  padding: 0 14px;
`;
const SearchRow = styled.div`
  display: flex;
  align-items: center;
  gap: 6px;
  margin: 43px 0 20px;
`;
const Square = styled.button<{ $s: number }>`
  flex: none;
  width: ${(p) => p.$s}px;
  height: ${(p) => p.$s}px;
  padding: 0;
  border: 2px solid #b0b0b0;
  background: linear-gradient(#e2e2e2, #f6f6f6);
  display: flex;
  align-items: center;
  justify-content: center;
`;
const ScrollGrid = styled.div`
  flex: 1;
  display: grid;
  grid-template-columns: minmax(0, 1fr) 30px;
  grid-template-rows: 1fr 28px;
`;
const Viewport = styled.div`
  overflow: hidden;
`;
const Content = styled.div`
  width: 802px;
  padding-top: 8px;
`;
const VTrack = styled.div`
  background: #fafafa;
  border-left: 1px solid #e0e0e0;
  padding: 2px 6px;
`;
const VThumb = styled.div`
  width: 16px;
  height: 168px;
  border-radius: 8px;
  background: #c2c2c2;
`;
const HTrack = styled.div`
  background: #fafafa;
  border-top: 1px solid #e4e4e4;
  padding: 6px 2px;
`;
const HThumb = styled.div`
  width: 88%;
  height: 16px;
  border-radius: 8px;
  background: #c2c2c2;
`;
const Corner = styled.div`
  background: #fff;
  border: 1px solid #dcdcdc;
  border-right: 0;
  border-bottom: 0;
`;
const SectionRow = styled.div`
  display: flex;
  align-items: center;
  gap: 12px;
  ${Push} { width: 72px; }
`;
const SectionButton = styled.button`
  width: 470px;
  height: 52px;
  padding: 0 20px 0 26px;
  border: 2px solid #a8a8a8;
  background: #ebebeb;
  display: flex;
  align-items: center;
  gap: 24px;
  font-weight: 700;
  font-size: 27px;
`;
const SliceRow = styled.div`
  display: flex;
  align-items: center;
  margin-top: 40px;
  label { width: 134px; }
`;
const Heading = styled.h3`
  margin-top: 24px;
  font-weight: 700;
  font-size: 27px;
  line-height: 32px;
  border-bottom: 1px solid #b8b8b8;
  box-shadow: 0 2px 0 #fff;
`;
const CheckRow = styled.label`
  margin: 19px 0 2px;
  padding-left: 4px;
  height: 28px;
  display: flex;
  align-items: center;
  gap: 8px;
  input {
    appearance: none;
    width: 27px;
    height: 27px;
    border: 1px solid #c0c0c0;
    border-radius: 6px;
    background: #fff;
  }
`;
const Vectors = styled.div`
  display: grid;
  grid-template-columns: 86px repeat(3, 1fr);
  gap: 6px;
  align-items: center;
  padding-left: 4px;
`;
const Note = styled.p`
  margin: 6px 0 12px;
  padding-left: 4px;
  font-weight: 700;
  line-height: 32px;
  white-space: nowrap;
`;
const NormalGrid = styled.div`
  display: grid;
  grid-template-columns: 1fr 1fr;
  gap: 8px;
  padding: 0 12px 0 17px;
`;
const Wide = styled(Push)`
  grid-column: 1 / -1;
`;
const Left = styled(Push)`
  grid-column: 1;
`;
const Rule = styled.hr<{ $indent?: number }>`
  margin: ${(p) => (p.$indent ? 18 : 24)}px 0 0 ${(p) => p.$indent ?? 0}px;
  border: 0;
  border-top: 1px solid #b8b8b8;
  border-bottom: 2px solid #fff;
`;

const Work = styled.section`
  flex: 1;
  min-width: 0;
  display: flex;
  flex-direction: column;
  background: #e1e1e1;
  padding-bottom: 7px;
`;
const WorkTabs = styled(TabStrip)`
  border-top: 1px solid #f0f0f0;
  padding-right: 2px;
`;
const ViewHead = styled.div`
  display: flex;
  align-items: center;
  padding: 0 4px 0 6px;
  height: 44px;
  margin-bottom: 2px;
`;
const ViewTools = styled.div`
  ${barFill};
  height: 44px;
  display: flex;
  align-items: center;
  border-top: 1px solid #fff;
  border-bottom: 3px solid #aeaeae;
`;
const ViewName = styled.a`
  margin-left: auto;
  margin-right: 22px;
  color: #000;
  font-weight: 700;
  font-size: 27px;
  text-decoration: underline;
  text-decoration-thickness: 2px;
  text-underline-offset: 4px;
`;
const ViewButtons = styled.div`
  display: flex;
  gap: 2px;
`;
const Frame = styled.div`
  flex: 1;
  margin: 0 5px 0 6px;
  display: flex;
  border: 4px solid #00f;
  padding: 2px 1px 1px 2px;
  background: #e6e6e6;
`;
const Scene = styled.div`
  flex: 1;
  display: flex;
  flex-direction: column;
  align-items: center;
  background: #52576e;
  padding-top: 204px;
`;
const Legend = styled.figure`
  width: 33%;
  margin: 0 36px 0 0;
  color: #fff;
  font: 300 33px/38px "Open Sans", "Liberation Sans", sans-serif;
  text-shadow: 0 0 1px #fff;
  text-align: center;
`;
const Labels = styled.div`
  position: relative;
  height: 44px;
`;
const TickLabel = styled.span`
  position: absolute;
  top: 0;
  transform: translateX(-50%);
`;
const ColorBar = styled.div`
  position: relative;
  height: 31px;
  margin-top: 17px;
  background: linear-gradient(90deg, #3b4cc0, #5977e3 10%, #7b9ff9 22%, #9ebeff 32%, #c0d4f5 41%, #dddcdc 50%, #f2cbb7 60%, #f7ac8e 70%, #ee8468 80%, #d65244 90%, #b40426);
`;
const Tick = styled.i`
  position: absolute;
  top: -16px;
  width: 1px;
  height: 23px;
  background: #fff;
`;
const Slab = styled.div`
  width: 53%;
  max-width: 1086px;
  height: 164px;
  margin-top: 153px;
  background:
    radial-gradient(ellipse 90px 110px at 8% 50%, rgba(150, 34, 34, 0.35), transparent),
    radial-gradient(ellipse 60px 60px at 90% 2%, rgba(76, 104, 184, 0.4), transparent),
    radial-gradient(ellipse 60px 60px at 90% 98%, rgba(76, 104, 184, 0.4), transparent),
    linear-gradient(90deg, #8e0e1c, #9c2a28 5%, #b04e38 11%, #bd6c50 19%, #c27d60 25%, #c28b70 30%, #bba18e 40%, #a9aba8 48%, #9ba7b3 55%, #8398c2 65%, #6682bb 75%, #4e66b1 83%, #445ca8 90%, #384a9c 95%, #2e3888);
`;
const Status = styled.footer`
  height: 52px;
  border-top: 1px solid #6c6c6c;
  display: flex;
  align-items: center;
  padding: 2px 42px 0 49.44%;
  gap: 2px;
  background:
    linear-gradient(90deg, rgba(255, 255, 255, 0.2), rgba(255, 255, 255, 0.16) 10%, transparent 15%, transparent 84%, rgba(255, 255, 255, 0.14) 87%),
    linear-gradient(#e8e8e8, #a8a8a8);
`;
const StatusButton = styled(Square)`
  border-color: #bcbcbc;
  background: #d8d8d8;
`;
const Progress = styled.div`
  flex: 1;
  height: 12px;
  border: 1px solid #a0a0a0;
  border-radius: 6px;
  background: #bcbcbc;
`;

/* ---------- data ---------- */

const ticks: [string, number][] = [
  ["1.0e+01", 0],
  ["11", 20],
  ["11.5", 30.6],
  ["12", 41.2],
  ["12.5", 51.9],
  ["13", 62.6],
  ["13.5", 73.2],
  ["14", 83.9],
  ["1.5e+01", 100],
];

type ToolItem = [string, React.ReactNode];

const fileTools: ToolItem[][] = [
  [["Open", <OpenIcon />], ["Load State", <LoadIcon />]],
  [["Connect", <Servers />], ["Disconnect", <Servers bad />]],
  [["Undo", <UndoIcon />], ["Redo", <RedoIcon />]],
  [["Auto Apply", <ServerArrow />], ["Capture", <CaptureIcon />], ["Color Palette", <PaletteIcon />]],
];
const vcrTools: ToolItem[] = [
  ["First Frame", <TriBar tri="M27 32 L57 11 V54 Z" bar={8} />],
  ["Previous Frame", <TriBar tri="M6 32 L37 11 V54 Z" bar={44} />],
  ["Play", <TriBar tri="M20 11 L52 32 L20 54 Z" />],
  ["Next Frame", <TriBar tri="M28 11 L59 32 L28 54 Z" bar={6} />],
  ["Last Frame", <TriBar tri="M7 11 L38 32 L7 54 Z" bar={42} />],
  ["Loop", <LoopIcon />],
];
const colorTools: ToolItem[] = [
  ["Color Legend", <ColorBarIcon />],
  ["Edit Color Map", <EditMapIcon />],
  ["Rescale to Data", <RescaleIcon />],
  ["Rescale to Custom", <RescaleIcon mark="c" />],
  ["Rescale over Time", <RescaleIcon mark="t" />],
  ["Rescale to Visible", <RescaleVisibleIcon />],
];
const cameraTools: ToolItem[] = [
  ["Reset Camera", <ResetCamIcon />],
  ["Zoom to Data", <ZoomDataIcon />],
  ["Zoom to Box", <ZoomBoxIcon />],
  ["View +X", <AxisIcon label="+X" up={GR} box={RE} side={YE} />],
  ["View -X", <AxisIcon label="-X" right up={GR} box={RE} side={YE} />],
  ["View +Y", <AxisIcon label="+Y" right up={GR} box={YE} side={RE} />],
  ["View -Y", <AxisIcon label="-Y" up={GR} box={YE} side={RE} />],
  ["View +Z", <AxisIcon label="+Z" up={YE} box={GR} side={RE} />],
  ["View -Z", <AxisIcon label="-Z" right up={YE} box={GR} side={RE} />],
  ["Rotate clockwise", <TurnIcon />],
  ["Rotate counterclockwise", <TurnIcon left />],
];
const centerTools: ToolItem[] = [
  ["Orientation Axes", <OrientIcon />],
  ["Show Center", <RotateIcon mark="dot" />],
  ["Reset Center", <RotateIcon mark="cross" />],
  ["Pick Center", <RotateIcon mark="cursor" />],
];
const filterTools: ToolItem[] = [
  ["Calculator", <CalcIcon />],
  ["Contour", <ContourIcon />],
  ["Clip", <ClipIcon />],
  ["Slice", <SliceIcon />],
  ["Threshold", <ThresholdIcon />],
  ["Extract Subset", <SubsetIcon />],
  ["Glyph", <GlyphIcon />],
  ["Stream Tracer", <StreamIcon />],
  ["Warp", <WarpIcon />],
  ["Group", <GroupIcon />],
  ["Extract Level", <ExtractIcon />],
];
const analysisTools: ToolItem[] = [
  ["Extract Selection", <SelectExtractIcon />],
  ["Plot Global Variables", <PlotTimeIcon />],
  ["Plot Over Line", <PlotLineIcon />],
  ["Plot Selection Over Time", <PlotTimeIcon sel />],
  ["Probe", <ProbeIcon />],
];
const viewTools: ToolItem[][] = [
  [["Camera Undo", <CamUndo />], ["Camera Redo", <CamUndo redo />]],
  [["Toggle 3D", "3D"], ["Adjust Camera", <CamAdjust />]],
  [["Add Selection", <SelMod plus />], ["Subtract Selection", <SelMod minus />], ["Toggle Selection", <SelMod plus minus />]],
  [
    ["Select Cells", <SelIcon kind="cell" />],
    ["Select Points", <SelIcon kind="point" />],
    ["Select Cells Through", <SelIcon kind="block" />],
    ["Select Points Through", <SelIcon kind="pts3d" />],
    ["Polygon Cells", <SelIcon kind="polyCell" />],
    ["Polygon Points", <SelIcon kind="polyPt" />],
    ["Select Block", <SelIcon kind="blocks" />],
    ["Pick Cells", <PickIcon />],
    ["Pick Points", <PickIcon pt />],
    ["Hover Points", <HoverIcon />],
    ["Hover Cells", <HoverIcon cell />],
    ["Clear Selection", <TrashIcon />],
  ],
];

const Tools = ({ items, w, checked }: { items: ToolItem[]; w?: number; checked?: number }) => (
  <>
    {items.map(([name, icon], i) => (
      <Tool key={name} aria-label={name} $w={w} $checked={checked === i}>
        {icon}
      </Tool>
    ))}
  </>
);

const Segments = ({ groups, w }: { groups: ToolItem[][]; w?: number }) => (
  <>
    {groups.map((g, i) => (
      <React.Fragment key={g[0][0]}>
        {i > 0 && <Sep />}
        <Tools items={g} w={w} />
      </React.Fragment>
    ))}
  </>
);

const VectorRow = ({ name, values }: { name: string; values: string[] }) => (
  <>
    <label htmlFor={`${name}-0`}>{name}</label>
    {values.map((v, i) => (
      <Field key={i} id={`${name}-${i}`} aria-label={i ? `${name} ${i + 1}` : undefined} defaultValue={v} />
    ))}
  </>
);

export default function App() {
  return (
    <Shell>
      <GlobalStyle />
      <Defs />
      <TitleBar>
        <Lights>
          <Light aria-label="Close" $c="#ee6a5f" $b="#d45a50" />
          <Light aria-label="Minimize" $c="#f5be4f" $b="#dba43c" />
          <Light aria-label="Zoom" $c="#62c655" $b="#50ac44" />
        </Lights>
        <WindowTitle>ParaView 5.4.1 64-bit</WindowTitle>
        <Lights />
      </TitleBar>

      <Toolbar>
        <Group $first>
          <Grip />
          <Segments groups={fileTools} />
        </Group>
        <Group>
          <Grip />
          <Tools items={vcrTools} />
        </Group>
        <TimeGroup>
          <Grip />
          <TimeLabel htmlFor="time">Time:</TimeLabel>
          <Field id="time" $w={250} defaultValue="0" />
          <TimeIndex aria-label="Time index" $w={42} $muted defaultValue="0" />
          <Spin aria-label="Step time">
            <Chevrons color="#8a8a8a" />
          </Spin>
        </TimeGroup>
      </Toolbar>

      <Toolbar>
        <Group $first>
          <Grip />
          <Tools items={colorTools} checked={0} />
          <Combos>
            <ComboBox $w={420}>
              <ComboIcon>
                <PointIcon />
              </ComboIcon>
              <Select aria-label="Color by" $pad={57}>
                <option>p</option>
              </Select>
              <ComboArrow>
                <Chevrons />
              </ComboArrow>
            </ComboBox>
            <ComboBox $w={196} $off>
              <Select aria-label="Component" $pad={16} disabled />
              <ComboArrow $off>
                <Chevrons color="#909090" />
              </ComboArrow>
            </ComboBox>
          </Combos>
        </Group>
        <Group>
          <Grip />
          <Combos>
            <ComboBox $w={287}>
              <Select aria-label="Representation" $pad={16}>
                <option>Surface</option>
              </Select>
              <ComboArrow>
                <Chevrons />
              </ComboArrow>
            </ComboBox>
          </Combos>
        </Group>
        <Group>
          <Grip />
          <Tools items={cameraTools} />
        </Group>
        <Group>
          <Grip />
          <Tools items={centerTools} />
        </Group>
        <Group>
          <Grip />
        </Group>
      </Toolbar>

      <Toolbar>
        <Group $first $gap={8}>
          <Grip $gap={8} />
          <Tools items={filterTools} />
        </Group>
        <Group $gap={8}>
          <Grip $gap={8} />
          <Tools items={analysisTools} />
        </Group>
      </Toolbar>

      <Main>
        <Dock>
          <DockTitle>
            <DockClose aria-label="Close Pipeline Browser">
              <RoundIcon />
            </DockClose>
            <h2>Pipeline Browser</h2>
          </DockTitle>
          <Tree>
            <TreeRow>
              <EyeSlot as="span" />
              <TreeItem>
                <ServerIcon />
                builtin:
              </TreeItem>
            </TreeRow>
            <TreeRow>
              <EyeSlot aria-label="Show case.foam">
                <TreeEye />
              </EyeSlot>
              <TreeItem>
                <CubeIcon />
                case.foam
              </TreeItem>
            </TreeRow>
            <TreeRow>
              <EyeSlot aria-label="Hide Slice1">
                <TreeEye on />
              </EyeSlot>
              <TreeItem $sel>
                <CubeIcon />
                Slice1
              </TreeItem>
            </TreeRow>
          </Tree>
          <DockTabs $h={43}>
            <TabSet>
              <DockTab $on $w={170}>Properties</DockTab>
              <DockTab $w={182}>Information</DockTab>
            </TabSet>
          </DockTabs>
          <DockTitle>
            <DockClose aria-label="Close Properties">
              <RoundIcon />
            </DockClose>
            <h2>Properties</h2>
          </DockTitle>
          <Panel>
            <ActionRow>
              <Push $icon disabled>
                <ServerArrow s={32} faded />
                Apply
              </Push>
              <Push $icon disabled>
                <ForbidIcon />
                Reset
              </Push>
              <Push $icon>
                <DeleteIcon />
                Delete
              </Push>
              <Push aria-label="Help">
                <HelpIcon />
              </Push>
            </ActionRow>
            <SearchRow>
              <Field aria-label="Search properties" placeholder="Search ... (use Esc to clear text)" />
              <Square $s={52} aria-label="Advanced">
                <GearIcon />
              </Square>
            </SearchRow>
            <ScrollGrid>
              <Viewport>
                <Content>
                  <SectionRow>
                    <SectionButton>
                      <MinusIcon />
                      Properties (Slice1)
                    </SectionButton>
                    <Push aria-label="Copy">
                      <CopyIcon />
                    </Push>
                    <Push aria-label="Paste" disabled>
                      <PasteIcon />
                    </Push>
                    <Push aria-label="Restore">
                      <RefreshIcon />
                    </Push>
                  </SectionRow>
                  <SliceRow>
                    <label htmlFor="slice-type">Slice Type</label>
                    <ComboBox>
                      <Select id="slice-type" $pad={16}>
                        <option>Plane</option>
                      </Select>
                    </ComboBox>
                  </SliceRow>
                  <Heading>Plane Parameters</Heading>
                  <CheckRow>
                    <input type="checkbox" />
                    Show Plane
                  </CheckRow>
                  <Vectors>
                    <VectorRow name="Origin" values={["8.58306884765625", "0", "66"]} />
                    <VectorRow name="Normal" values={["1", "0", "0"]} />
                  </Vectors>
                  <Note>
                    Note: Use 'P' to pick 'Origin' on mesh or 'Ctrl+P' to snap
                    <br />
                    closest mesh point
                  </Note>
                  <NormalGrid>
                    <Push>X Normal</Push>
                    <Push>Camera Normal</Push>
                    <Left>Y Normal</Left>
                    <Left>Z Normal</Left>
                    <Wide>Reset Camera to Normal</Wide>
                    <Wide>Reset to Data Bounds</Wide>
                  </NormalGrid>
                  <Rule />
                  <Rule $indent={85} />
                </Content>
              </Viewport>
              <VTrack>
                <VThumb />
              </VTrack>
              <HTrack>
                <HThumb />
              </HTrack>
              <Corner />
            </ScrollGrid>
          </Panel>
        </Dock>

        <Work>
          <WorkTabs $h={52}>
            <TabSet>
              <Tab $on $w={245}>
                <WinIcon />
                Layout #1
                <RoundIcon />
              </Tab>
              <PlusTab $w={60} aria-label="New layout">+</PlusTab>
            </TabSet>
          </WorkTabs>
          <ViewHead>
            <ViewTools>
              <Segments groups={viewTools} w={44} />
            </ViewTools>
            <ViewName href="#view">RenderView1</ViewName>
            <ViewButtons>
              <Square $s={44} aria-label="Split horizontal"><WinIcon kind="h" /></Square>
              <Square $s={44} aria-label="Split vertical"><WinIcon kind="v" /></Square>
              <Square $s={44} aria-label="Maximize"><WinIcon /></Square>
              <Square $s={44} aria-label="Pop out"><RoundIcon s={22} kind="pop" /></Square>
              <Square $s={44} aria-label="Close view"><RoundIcon s={22} /></Square>
            </ViewButtons>
          </ViewHead>
          <Frame>
            <Scene>
              <Legend>
                <figcaption>p</figcaption>
                <Labels>
                  {ticks.map(([t, at]) => (
                    <TickLabel key={t} style={{ left: `${at}%` }}>{t}</TickLabel>
                  ))}
                </Labels>
                <ColorBar>
                  {ticks.map(([t, at]) => (
                    <Tick key={t} style={{ left: `${at}%` }} />
                  ))}
                </ColorBar>
              </Legend>
              <Slab />
            </Scene>
          </Frame>
        </Work>
      </Main>

      <Status>
        <StatusButton $s={44} aria-label="Abort">
          <DeleteIcon faded />
        </StatusButton>
        <Progress />
      </Status>
    </Shell>
  );
}
